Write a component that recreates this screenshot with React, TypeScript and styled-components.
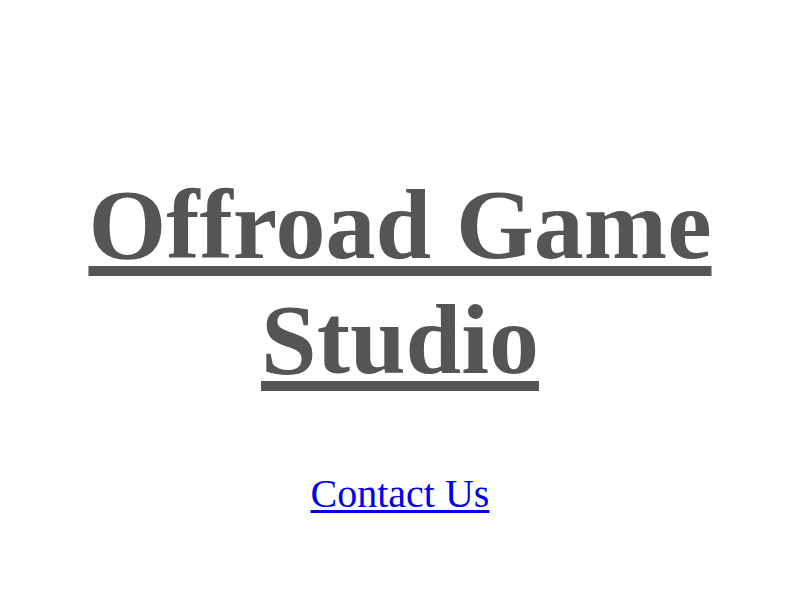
import styled, { createGlobalStyle } from "styled-components";

const GlobalStyle = createGlobalStyle`
  html, body {
    margin: 0;
    padding: 0;
    background: #ffffff;
    font-family: "Liberation Serif", "Times New Roman", serif;
  }
`;

const Page = styled.main`
  display: flex;
  flex-direction: column;
  align-items: center;
  min-height: 100vh;
  box-sizing: border-box;
  padding-top: 167px;
  text-align: center;
`;

const Title = styled.h1`
  margin: 0;
  font-size: 100px;
  font-weight: 700;
  line-height: 115px;
  color: #555555;
  text-decoration: underline;
  text-decoration-thickness: 10px;
  text-underline-offset: 8px;
`;

const ContactLink = styled.a`
  margin-top: 74px;
  font-size: 40px;
  line-height: 46px;
  color: #0000ee;
  text-decoration: underline;
  text-decoration-thickness: 3px;
  text-underline-offset: 3px;
`;

export default function App() {
  return (
    <>
      <GlobalStyle />
      <Page>
        <Title>Offroad Game Studio</Title>
        <ContactLink href="#contact">Contact Us</ContactLink>
      </Page>
    </>
  );
}
